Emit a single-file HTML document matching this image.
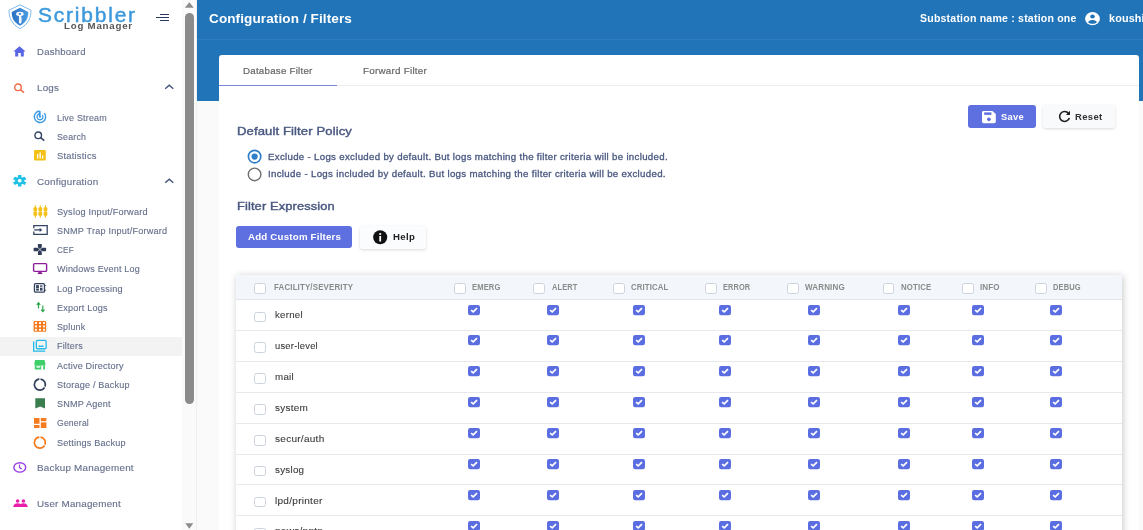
<!DOCTYPE html>
<html><head><meta charset="utf-8"><style>
html,body{margin:0;padding:0;width:1143px;height:530px;overflow:hidden;background:#fff}
body{position:relative;font-family:"Liberation Sans",sans-serif}
.t{position:absolute;white-space:nowrap;line-height:1}
svg{overflow:visible}
</style></head><body><div id="root" style="position:absolute;left:0;top:0;width:1143px;height:530px;will-change:transform">
<div style="position:absolute;left:0;top:0;width:182px;height:530px;background:#fff"></div>
<div style="position:absolute;left:0;top:337px;width:182px;height:19px;background:#f3f3f3"></div>
<div style="position:absolute;left:182px;top:0;width:14px;height:530px;background:#fafafa"></div>
<div style="position:absolute;left:196px;top:0;width:1px;height:530px;background:#efefef"></div>
<div style="position:absolute;left:185px;top:12.7px;width:8.8px;height:391px;background:#8b8b8b;border-radius:4.4px"></div>
<svg style="position:absolute;left:184px;top:1px" width="11" height="8"><path d="M0.8 6.8 L5.3 1.3 L9.8 6.8 Z" fill="#8d8d8d"/></svg>
<svg style="position:absolute;left:184px;top:522px" width="11" height="8"><path d="M1.3 1.2 L5.3 6.8 L9.3 1.2 Z" fill="#8d8d8d"/></svg>
<svg style="position:absolute;left:8px;top:4px" width="24" height="26" viewBox="0 0 24 26">
<defs><linearGradient id="sg" x1="0" x2="1" y1="0" y2="0"><stop offset="0" stop-color="#2b6fc2"/><stop offset="1" stop-color="#4b9de2"/></linearGradient></defs>
<path d="M12 0.8 L23 6.3 C23 14 20 20.5 12 24.6 C4 20.5 1 14 1 6.3 Z" fill="#fff" stroke="#74b3ea" stroke-width="0.9"/>
<path d="M12 3.7 L20.3 8 C20.3 14 18 18.5 12 21.8 C6 18.5 3.7 14 3.7 8 Z" fill="url(#sg)"/>
<ellipse cx="11.9" cy="9.9" rx="3.8" ry="2.1" fill="#f4f6f8"/><ellipse cx="11.9" cy="9.8" rx="1.3" ry="0.9" fill="#2f78c8"/>
<path d="M11 11.8 L13.4 11.8 L13.4 19 L12.2 19.8 L11 19 Z" fill="#f4f6f8"/>
<path d="M13.4 14.5 L14.3 14.5 L14.3 15.4 L13.4 15.4 Z M13.4 16.6 L14.1 16.6 L14.1 17.5 L13.4 17.5Z" fill="#f4f6f8"/>
</svg>
<div class="t" style="left:37.90px;top:5.98px;font-size:19.4px;color:#3d99dc;letter-spacing:1.700px;-webkit-text-stroke:0.45px #3d99dc;transform:scaleX(1.0773);transform-origin:0.00px 0;">Scribbler</div>
<div class="t" style="left:63.50px;top:22.32px;font-size:8.6px;color:#555;font-weight:bold;letter-spacing:0.700px;transform:scaleX(1.1266);transform-origin:0.00px 0;">Log Manager</div>
<div style="position:absolute;left:160px;top:14px;width:9px;height:1.3px;background:#2b3a5c"></div>
<div style="position:absolute;left:156px;top:16.7px;width:13px;height:1.3px;background:#2b3a5c"></div>
<div style="position:absolute;left:160px;top:20.2px;width:9px;height:1.3px;background:#2b3a5c"></div>
<div class="t" style="left:37.40px;top:47.51px;font-size:9.2px;color:#646e8b;letter-spacing:0.200px;-webkit-text-stroke:0.12px #646e8b;transform:scaleX(1.0432);transform-origin:0.00px 0;">Dashboard</div>
<div class="t" style="left:37.00px;top:83.71px;font-size:9.2px;color:#646e8b;letter-spacing:0.200px;-webkit-text-stroke:0.12px #646e8b;transform:scaleX(1.0698);transform-origin:0.00px 0;">Logs</div>
<div class="t" style="left:37.00px;top:177.61px;font-size:9.2px;color:#646e8b;letter-spacing:0.200px;-webkit-text-stroke:0.12px #646e8b;transform:scaleX(1.0711);transform-origin:0.00px 0;">Configuration</div>
<div class="t" style="left:36.90px;top:463.71px;font-size:9.2px;color:#646e8b;letter-spacing:0.200px;-webkit-text-stroke:0.12px #646e8b;transform:scaleX(1.0728);transform-origin:0.00px 0;">Backup Management</div>
<div class="t" style="left:36.90px;top:499.51px;font-size:9.2px;color:#646e8b;letter-spacing:0.200px;-webkit-text-stroke:0.12px #646e8b;transform:scaleX(1.0679);transform-origin:0.00px 0;">User Management</div>
<div class="t" style="left:57.30px;top:113.98px;font-size:9.0px;color:#646e8b;letter-spacing:0.200px;-webkit-text-stroke:0.12px #646e8b;transform:scaleX(0.9937);transform-origin:0.00px 0;">Live Stream</div>
<div class="t" style="left:57.30px;top:133.18px;font-size:9.0px;color:#646e8b;letter-spacing:0.200px;-webkit-text-stroke:0.12px #646e8b;transform:scaleX(0.9821);transform-origin:0.00px 0;">Search</div>
<div class="t" style="left:57.30px;top:152.18px;font-size:9.0px;color:#646e8b;letter-spacing:0.200px;-webkit-text-stroke:0.12px #646e8b;transform:scaleX(1.0450);transform-origin:0.00px 0;">Statistics</div>
<div class="t" style="left:57.30px;top:207.88px;font-size:9.0px;color:#646e8b;letter-spacing:0.200px;-webkit-text-stroke:0.12px #646e8b;transform:scaleX(1.0197);transform-origin:0.00px 0;">Syslog Input/Forward</div>
<div class="t" style="left:57.30px;top:226.88px;font-size:9.0px;color:#646e8b;letter-spacing:0.200px;-webkit-text-stroke:0.12px #646e8b;transform:scaleX(1.0110);transform-origin:0.00px 0;">SNMP Trap Input/Forward</div>
<div class="t" style="left:57.30px;top:245.78px;font-size:9.0px;color:#646e8b;letter-spacing:0.200px;-webkit-text-stroke:0.12px #646e8b;transform:scaleX(0.9022);transform-origin:0.00px 0;">CEF</div>
<div class="t" style="left:57.30px;top:265.28px;font-size:9.0px;color:#646e8b;letter-spacing:0.200px;-webkit-text-stroke:0.12px #646e8b;transform:scaleX(1.0005);transform-origin:0.00px 0;">Windows Event Log</div>
<div class="t" style="left:57.30px;top:284.78px;font-size:9.0px;color:#646e8b;letter-spacing:0.200px;-webkit-text-stroke:0.12px #646e8b;transform:scaleX(1.0131);transform-origin:0.00px 0;">Log Processing</div>
<div class="t" style="left:57.30px;top:303.78px;font-size:9.0px;color:#646e8b;letter-spacing:0.200px;-webkit-text-stroke:0.12px #646e8b;transform:scaleX(1.0117);transform-origin:0.00px 0;">Export Logs</div>
<div class="t" style="left:57.30px;top:322.78px;font-size:9.0px;color:#646e8b;letter-spacing:0.200px;-webkit-text-stroke:0.12px #646e8b;transform:scaleX(0.9865);transform-origin:0.00px 0;">Splunk</div>
<div class="t" style="left:57.30px;top:342.18px;font-size:9.0px;color:#646e8b;letter-spacing:0.200px;-webkit-text-stroke:0.12px #646e8b;transform:scaleX(0.9969);transform-origin:0.00px 0;">Filters</div>
<div class="t" style="left:57.30px;top:361.78px;font-size:9.0px;color:#646e8b;letter-spacing:0.200px;-webkit-text-stroke:0.12px #646e8b;transform:scaleX(1.0061);transform-origin:0.00px 0;">Active Directory</div>
<div class="t" style="left:57.30px;top:380.88px;font-size:9.0px;color:#646e8b;letter-spacing:0.200px;-webkit-text-stroke:0.12px #646e8b;transform:scaleX(1.0079);transform-origin:0.00px 0;">Storage / Backup</div>
<div class="t" style="left:57.30px;top:399.98px;font-size:9.0px;color:#646e8b;letter-spacing:0.200px;-webkit-text-stroke:0.12px #646e8b;transform:scaleX(1.0086);transform-origin:0.00px 0;">SNMP Agent</div>
<div class="t" style="left:57.30px;top:419.28px;font-size:9.0px;color:#646e8b;letter-spacing:0.200px;-webkit-text-stroke:0.12px #646e8b;transform:scaleX(0.9567);transform-origin:0.00px 0;">General</div>
<div class="t" style="left:57.30px;top:438.58px;font-size:9.0px;color:#646e8b;letter-spacing:0.200px;-webkit-text-stroke:0.12px #646e8b;transform:scaleX(1.0100);transform-origin:0.00px 0;">Settings Backup</div>
<svg style="position:absolute;left:163px;top:83.4px" width="12" height="8"><path d="M2.2 5.75 L6.25 2.2 L10.3 5.75" fill="none" stroke="#44547a" stroke-width="1.45"/></svg>
<svg style="position:absolute;left:163px;top:176.9px" width="12" height="8"><path d="M2.2 5.75 L6.25 2.2 L10.3 5.75" fill="none" stroke="#44547a" stroke-width="1.45"/></svg>
<svg style="position:absolute;left:13px;top:46px" width="13" height="11" viewBox="0 0 13 11"><path d="M6.5 0.3 L12.6 5.6 L10.8 5.6 L10.8 10.5 L7.8 10.5 L7.8 7 L5.2 7 L5.2 10.5 L2.2 10.5 L2.2 5.6 L0.4 5.6 Z" fill="#5865e4"/></svg>
<svg style="position:absolute;left:13px;top:82.5px" width="13" height="10" viewBox="0 0 13 10"><circle cx="5" cy="4.3" r="3.3" fill="none" stroke="#f26b4a" stroke-width="1.4"/><path d="M7.4 6.6 L11 9.6" stroke="#f26b4a" stroke-width="1.5"/></svg>
<svg style="position:absolute;left:30px;top:106px" width="20" height="20" viewBox="0 0 20 20"><path d="M14.37 7.09 A5.7 5.7 0 1 1 9.50 5.07" fill="none" stroke="#3d9be3" stroke-width="1.4"/><path d="M12.30 8.82 A3.0 3.0 0 1 1 9.74 7.76" fill="none" stroke="#3d9be3" stroke-width="1.3"/><path d="M9.75 4.9 L9.75 10.75" stroke="#3d9be3" stroke-width="1.8"/><circle cx="10" cy="10.75" r="1.1" fill="#3d9be3"/></svg>
<svg style="position:absolute;left:33px;top:131px" width="13" height="10" viewBox="0 0 13 10"><circle cx="5.2" cy="4.3" r="3.3" fill="none" stroke="#354462" stroke-width="1.4"/><path d="M7.6 6.6 L11.3 9.6" stroke="#354462" stroke-width="1.6"/></svg>
<svg style="position:absolute;left:34px;top:149.5px" width="12" height="11" viewBox="0 0 12 11"><rect x="0" y="0" width="11.8" height="10.5" rx="1" fill="#f3c118"/><rect x="3" y="4" width="1.3" height="4.5" fill="#fff"/><rect x="5.5" y="2.5" width="1.3" height="6" fill="#fff"/><rect x="8" y="5.5" width="1.3" height="3" fill="#fff"/></svg>
<svg style="position:absolute;left:12.8px;top:174.6px" width="13.4" height="11.6" viewBox="-10 -10 20 20" preserveAspectRatio="none"><g fill="#1fc0e6"><circle r="6.6"/><rect x="-2.6" y="-10" width="5.2" height="5" rx="0.6" transform="rotate(0)"/><rect x="-2.6" y="-10" width="5.2" height="5" rx="0.6" transform="rotate(60)"/><rect x="-2.6" y="-10" width="5.2" height="5" rx="0.6" transform="rotate(120)"/><rect x="-2.6" y="-10" width="5.2" height="5" rx="0.6" transform="rotate(180)"/><rect x="-2.6" y="-10" width="5.2" height="5" rx="0.6" transform="rotate(240)"/><rect x="-2.6" y="-10" width="5.2" height="5" rx="0.6" transform="rotate(300)"/></g><circle r="2.9" fill="#fff"/></svg>
<svg style="position:absolute;left:32.5px;top:204.5px" width="15" height="13" viewBox="0 0 15 13"><g fill="#f3c118"><rect x="1.75" y="0.3" width="1.1" height="12.4"/><rect x="0.40" y="2.2" width="3.8" height="4.1" rx="1.3"/><rect x="0.40" y="6.6" width="3.8" height="4.3" rx="1.3"/><rect x="6.75" y="0.3" width="1.1" height="12.4"/><rect x="5.40" y="2.2" width="3.8" height="4.1" rx="1.3"/><rect x="5.40" y="6.6" width="3.8" height="4.3" rx="1.3"/><rect x="11.95" y="0.3" width="1.1" height="12.4"/><rect x="10.60" y="2.2" width="3.8" height="4.1" rx="1.3"/><rect x="10.60" y="6.6" width="3.8" height="4.3" rx="1.3"/></g></svg>
<svg style="position:absolute;left:32.5px;top:225px" width="15" height="11" viewBox="0 0 15 11"><path d="M0.8 3.2 L0.8 0.7 L14.2 0.7 L14.2 9.4 L0.8 9.4 L0.8 6.6" fill="none" stroke="#354462" stroke-width="1.3"/><path d="M1.2 4.9 L7 4.9" stroke="#354462" stroke-width="1.3"/><path d="M6.6 2.8 L9.3 4.9 L6.6 7 Z" fill="#354462"/></svg>
<svg style="position:absolute;left:30px;top:240px" width="20" height="20" viewBox="0 0 20 20"><g fill="#2f3d58"><rect x="7.9" y="3.9" width="3.9" height="11.1" rx="0.6"/><rect x="3.6" y="7.8" width="12.5" height="3.4" rx="0.6"/></g><path d="M7.2 6.9 L12.5 12.1 M12.5 6.9 L7.2 12.1" stroke="#fff" stroke-width="0.7"/></svg>
<svg style="position:absolute;left:30px;top:260px" width="20" height="16" viewBox="0 0 20 16"><rect x="3.6" y="3.6" width="13" height="7.8" rx="1" fill="none" stroke="#8e1c9c" stroke-width="1.4"/><path d="M7.4 14 L12.6 14 L11.3 12.1 L8.7 12.1 Z" fill="#8e1c9c"/></svg>
<svg style="position:absolute;left:30px;top:280px" width="20" height="20" viewBox="0 0 20 20"><rect x="4.45" y="3.65" width="10" height="8.5" rx="1" fill="none" stroke="#34425f" stroke-width="1.3"/><g fill="#34425f"><rect x="6.1" y="5.1" width="2.8" height="3.4"/><rect x="10" y="5.1" width="2.5" height="2.2" opacity="0.7"/><rect x="6.1" y="9" width="2.8" height="1.6"/><rect x="10" y="7.9" width="2.5" height="2.7"/><path d="M15 4.9 L16.6 5.5 L15 6.1Z M15 9.6 L16.6 10.2 L15 10.8Z"/></g></svg>
<svg style="position:absolute;left:35.5px;top:302px" width="10" height="11" viewBox="0 0 10 11"><path d="M2.5 1 L2.5 6.5 M0.8 2.8 L2.5 0.8 L4.2 2.8" fill="none" stroke="#2aa84a" stroke-width="1.2"/><path d="M6.8 3.5 L6.8 9.5 M5.1 7.6 L6.8 9.6 L8.5 7.6" fill="none" stroke="#2aa84a" stroke-width="1.2"/></svg>
<svg style="position:absolute;left:30px;top:316px" width="20" height="20" viewBox="0 0 20 20"><rect x="3.6" y="4.9" width="12.6" height="10.8" rx="1" fill="#f47b20"/><g fill="#fff"><rect x="5.05" y="6.05" width="1.9" height="1.9"/><rect x="5.05" y="9.45" width="1.9" height="1.9"/><rect x="5.05" y="12.85" width="1.9" height="1.9"/><rect x="9.05" y="6.05" width="1.9" height="1.9"/><rect x="9.05" y="9.45" width="1.9" height="1.9"/><rect x="9.05" y="12.85" width="1.9" height="1.9"/><rect x="13.05" y="6.05" width="1.9" height="1.9"/><rect x="13.05" y="9.45" width="1.9" height="1.9"/><rect x="13.05" y="12.85" width="1.9" height="1.9"/></g></svg>
<svg style="position:absolute;left:30px;top:336px" width="20" height="20" viewBox="0 0 20 20"><path d="M3.65 6 L3.65 15.15 L14.7 15.15" fill="none" stroke="#23b9e8" stroke-width="1.3" stroke-linecap="round"/><rect x="6.35" y="4.45" width="9.8" height="8.3" rx="1.2" fill="none" stroke="#23b9e8" stroke-width="1.3"/><path d="M8.1 11 L9.7 9.1 L10.8 10.1 L12.3 8.9 L14.1 11 Z" fill="#23b9e8"/></svg>
<svg style="position:absolute;left:30px;top:356px" width="20" height="16" viewBox="0 0 20 16"><path d="M5.2 4.1 L14.5 4.1 L15.3 7 L15.3 9.5 L4.4 9.5 L4.4 7 Z" fill="#3ecf6a"/><path d="M4.8 9.5 L11.2 9.5 L11.2 13.6 L4.8 13.6 Z M13.2 9.5 L15 9.5 L15 13.6 L13.2 13.6Z" fill="#3ecf6a"/><rect x="6.5" y="10.2" width="3.7" height="1.4" fill="#fff"/></svg>
<svg style="position:absolute;left:30px;top:376px" width="20" height="18" viewBox="0 0 20 18"><path d="M10.47 3.13 A5.5 5.5 0 0 1 15.00 10.66 M14.56 11.51 A5.5 5.5 0 1 1 9.33 3.13" fill="none" stroke="#34425f" stroke-width="1.7"/></svg>
<svg style="position:absolute;left:34.8px;top:398px" width="11" height="11" viewBox="0 0 11 11"><path d="M0.3 0.3 L10 0.3 L10 10.5 L5.2 8.5 L0.3 10.5 Z" fill="#3a7d4f"/></svg>
<svg style="position:absolute;left:34px;top:418px" width="13" height="10" viewBox="0 0 13 10"><g fill="#f47b20"><rect x="0" y="0" width="5.5" height="5.8"/><rect x="6.8" y="0" width="5.6" height="3.2"/><rect x="0" y="7" width="5.5" height="3"/><rect x="6.8" y="4.4" width="5.6" height="5.6"/></g></svg>
<svg style="position:absolute;left:30px;top:433.6px" width="20" height="18" viewBox="0 0 20 18"><path d="M10.47 3.13 A5.5 5.5 0 0 1 15.00 10.66 M14.56 11.51 A5.5 5.5 0 1 1 9.33 3.13" fill="none" stroke="#f47b20" stroke-width="1.7"/></svg>
<svg style="position:absolute;left:12.5px;top:461.5px" width="14" height="11" viewBox="0 0 14 11"><ellipse cx="6.8" cy="5.4" rx="5.9" ry="4.7" fill="none" stroke="#9a3ee6" stroke-width="1.4"/><path d="M6.5 2.6 L6.5 5.6 L8.8 7" fill="none" stroke="#9a3ee6" stroke-width="1.2"/></svg>
<svg style="position:absolute;left:12.5px;top:499px" width="15" height="8" viewBox="0 0 15 8"><g fill="#e91eaa"><circle cx="4.6" cy="2" r="1.8"/><circle cx="10.4" cy="2" r="1.8"/><path d="M0.2 8 C0.5 5.2 2.5 4.3 4.6 4.3 C6.7 4.3 8.7 5.2 9 8Z"/><path d="M6 8 C6.3 5.2 8.3 4.3 10.4 4.3 C12.5 4.3 14.5 5.2 14.8 8Z"/></g></svg>
<div style="position:absolute;left:197px;top:0;width:946px;height:530px;background:#fafafa"></div>
<div style="position:absolute;left:197px;top:0;width:946px;height:101px;background:#2174b8"></div>
<div style="position:absolute;left:197px;top:39px;width:946px;height:1px;background:#2e7dbe"></div>
<div class="t" style="left:209.00px;top:11.93px;font-size:13.2px;color:#fff;font-weight:bold;letter-spacing:0.100px;transform:scaleX(1.0262);transform-origin:0.00px 0;">Configuration / Filters</div>
<div class="t" style="left:919.60px;top:13.01px;font-size:10.5px;color:#fff;font-weight:bold;letter-spacing:0.200px;transform:scaleX(1.0055);transform-origin:0.00px 0;">Substation name : station one</div>
<svg style="position:absolute;left:1085px;top:11.6px" width="15" height="13.4" viewBox="0 0 15 15" preserveAspectRatio="none"><circle cx="7.5" cy="7.5" r="7.4" fill="#fff"/><circle cx="7.5" cy="5.1" r="2.3" fill="#2174b8"/><path d="M3.1 11.4 C4.2 9.7 5.9 9.1 7.5 9.1 C9.1 9.1 10.8 9.7 11.9 11.4 C10.8 12.6 9.3 13.2 7.5 13.2 C5.7 13.2 4.2 12.6 3.1 11.4Z" fill="#2174b8"/></svg>
<div class="t" style="left:1109.00px;top:12.76px;font-size:10.8px;color:#fff;font-weight:bold;letter-spacing:0.150px;">koushi</div>
<div style="position:absolute;left:219px;top:55px;width:920px;height:500px;background:#fff;border-radius:3px"></div>
<div style="position:absolute;left:219px;top:85px;width:920px;height:1px;background:#ececec"></div>
<div style="position:absolute;left:219px;top:84.5px;width:118px;height:1.5px;background:#7a86d8"></div>
<div class="t" style="left:243.00px;top:66.24px;font-size:9.4px;color:#666;letter-spacing:0.250px;-webkit-text-stroke:0.20px #666;transform:scaleX(1.0337);transform-origin:0.00px 0;">Database Filter</div>
<div class="t" style="left:363.00px;top:66.24px;font-size:9.4px;color:#666;letter-spacing:0.250px;-webkit-text-stroke:0.20px #666;transform:scaleX(1.0449);transform-origin:0.00px 0;">Forward Filter</div>
<div style="position:absolute;left:968px;top:105px;width:68px;height:23px;background:#5e6fe0;border-radius:3px"></div>
<svg style="position:absolute;left:982px;top:110.7px" width="14" height="12.2" viewBox="0 0 14 13" preserveAspectRatio="none"><path d="M0 1.5 Q0 0 1.5 0 L10.5 0 L13.8 3.2 L13.8 11.5 Q13.8 13 12.3 13 L1.5 13 Q0 13 0 11.5Z" fill="#fff"/><rect x="2.2" y="1.5" width="7.2" height="2.6" fill="#5e6fe0"/><circle cx="6.9" cy="8.9" r="1.9" fill="#5e6fe0"/></svg>
<div class="t" style="left:1000.80px;top:113.01px;font-size:9.2px;color:#fff;font-weight:bold;letter-spacing:0.300px;transform:scaleX(1.0187);transform-origin:0.00px 0;">Save</div>
<div style="position:absolute;left:1043px;top:105px;width:72px;height:23px;background:#f8fafc;border-radius:3px;box-shadow:0 1px 3px rgba(0,0,0,0.15)"></div>
<svg style="position:absolute;left:1058px;top:110px" width="13" height="13" viewBox="0 0 13 13"><path d="M10.6 3.4 A5 5 0 1 0 11.4 8" fill="none" stroke="#222" stroke-width="1.6"/><path d="M12 0.8 L12 5 L7.8 5 Z" fill="#222"/></svg>
<div class="t" style="left:1075.40px;top:113.01px;font-size:9.2px;color:#333;font-weight:bold;letter-spacing:0.300px;transform:scaleX(1.0354);transform-origin:0.00px 0;">Reset</div>
<div class="t" style="left:237.00px;top:125.97px;font-size:10.9px;color:#4a5880;letter-spacing:0.100px;-webkit-text-stroke:0.40px #4a5880;transform:scaleX(1.1991);transform-origin:0.00px 0;">Default Filter Policy</div>
<svg style="position:absolute;left:240px;top:140px" width="30" height="45" viewBox="0 0 30 45"><circle cx="14.6" cy="16.6" r="6.2" fill="none" stroke="#2f7fc8" stroke-width="1.7"/><circle cx="14.6" cy="16.6" r="3.1" fill="#2f7fc8"/><circle cx="14.6" cy="34.4" r="6.3" fill="none" stroke="#6e6e6e" stroke-width="1.4"/></svg>
<div class="t" style="left:267.90px;top:152.63px;font-size:9.3px;color:#4a5880;letter-spacing:0.300px;-webkit-text-stroke:0.30px #4a5880;transform:scaleX(1.0389);transform-origin:0.00px 0;">Exclude - Logs excluded by default. But logs matching the filter criteria will be included.</div>
<div class="t" style="left:267.90px;top:170.33px;font-size:9.3px;color:#4a5880;letter-spacing:0.300px;-webkit-text-stroke:0.30px #4a5880;transform:scaleX(1.0420);transform-origin:0.00px 0;">Include - Logs included by default. But logs matching the filter criteria will be excluded.</div>
<div class="t" style="left:237.00px;top:200.57px;font-size:10.9px;color:#4a5880;letter-spacing:0.100px;-webkit-text-stroke:0.40px #4a5880;transform:scaleX(1.1807);transform-origin:0.00px 0;">Filter Expression</div>
<div style="position:absolute;left:236px;top:225.8px;width:116px;height:22.6px;background:#5e6fe0;border-radius:3px"></div>
<div class="t" style="left:248.00px;top:233.03px;font-size:9.3px;color:#fff;font-weight:bold;letter-spacing:0.200px;transform:scaleX(1.0427);transform-origin:0.00px 0;">Add Custom Filters</div>
<div style="position:absolute;left:360px;top:226px;width:66px;height:23px;background:#fbfcfd;border-radius:3px;box-shadow:0 1px 3px rgba(0,0,0,0.15)"></div>
<svg style="position:absolute;left:373.3px;top:229.7px" width="15" height="15" viewBox="0 0 15 15"><circle cx="7.2" cy="7.2" r="7" fill="#111"/><circle cx="7.2" cy="4" r="1.1" fill="#fff"/><rect x="6.3" y="6" width="1.8" height="5.5" fill="#fff"/></svg>
<div class="t" style="left:392.50px;top:232.24px;font-size:9.4px;color:#222;font-weight:bold;letter-spacing:0.300px;transform:scaleX(1.0258);transform-origin:0.00px 0;">Help</div>
<div style="position:absolute;left:236px;top:274.5px;width:886px;height:300px;background:#fff;box-shadow:1px 1px 7px rgba(0,0,0,0.22)"></div>
<div style="position:absolute;left:236px;top:274.5px;width:886px;height:24.8px;background:#f3f7fb"></div>
<div style="position:absolute;left:236px;top:299px;width:886px;height:1px;background:#e2e6eb"></div>
<div style="position:absolute;left:254.4px;top:283.2px;width:9.5px;height:8.5px;border:1px solid #cdd3dc;border-radius:2.5px;background:#fff"></div>
<div class="t" style="left:274.00px;top:283.02px;font-size:8.6px;color:#8a8a8a;font-weight:bold;letter-spacing:0.150px;transform:scaleX(0.9233);transform-origin:0.00px 0;">FACILITY/SEVERITY</div>
<div style="position:absolute;left:454.3px;top:283.2px;width:9.5px;height:8.5px;border:1px solid #cdd3dc;border-radius:2.5px;background:#fff"></div>
<div class="t" style="left:471.80px;top:283.02px;font-size:8.6px;color:#8a8a8a;font-weight:bold;letter-spacing:0.150px;transform:scaleX(0.8842);transform-origin:0.00px 0;">EMERG</div>
<div style="position:absolute;left:533.3px;top:283.2px;width:9.5px;height:8.5px;border:1px solid #cdd3dc;border-radius:2.5px;background:#fff"></div>
<div class="t" style="left:551.50px;top:283.02px;font-size:8.6px;color:#8a8a8a;font-weight:bold;letter-spacing:0.150px;transform:scaleX(0.8640);transform-origin:0.00px 0;">ALERT</div>
<div style="position:absolute;left:613.2px;top:283.2px;width:9.5px;height:8.5px;border:1px solid #cdd3dc;border-radius:2.5px;background:#fff"></div>
<div class="t" style="left:631.00px;top:283.02px;font-size:8.6px;color:#8a8a8a;font-weight:bold;letter-spacing:0.150px;transform:scaleX(0.9085);transform-origin:0.00px 0;">CRITICAL</div>
<div style="position:absolute;left:705.3px;top:283.2px;width:9.5px;height:8.5px;border:1px solid #cdd3dc;border-radius:2.5px;background:#fff"></div>
<div class="t" style="left:722.80px;top:283.02px;font-size:8.6px;color:#8a8a8a;font-weight:bold;letter-spacing:0.150px;transform:scaleX(0.8595);transform-origin:0.00px 0;">ERROR</div>
<div style="position:absolute;left:787.3px;top:283.2px;width:9.5px;height:8.5px;border:1px solid #cdd3dc;border-radius:2.5px;background:#fff"></div>
<div class="t" style="left:805.00px;top:283.02px;font-size:8.6px;color:#8a8a8a;font-weight:bold;letter-spacing:0.150px;transform:scaleX(0.9345);transform-origin:0.00px 0;">WARNING</div>
<div style="position:absolute;left:882.9px;top:283.2px;width:9.5px;height:8.5px;border:1px solid #cdd3dc;border-radius:2.5px;background:#fff"></div>
<div class="t" style="left:900.60px;top:283.02px;font-size:8.6px;color:#8a8a8a;font-weight:bold;letter-spacing:0.150px;transform:scaleX(0.9111);transform-origin:0.00px 0;">NOTICE</div>
<div style="position:absolute;left:962px;top:283.2px;width:9.5px;height:8.5px;border:1px solid #cdd3dc;border-radius:2.5px;background:#fff"></div>
<div class="t" style="left:979.80px;top:283.02px;font-size:8.6px;color:#8a8a8a;font-weight:bold;letter-spacing:0.150px;transform:scaleX(0.9332);transform-origin:0.00px 0;">INFO</div>
<div style="position:absolute;left:1035.3px;top:283.2px;width:9.5px;height:8.5px;border:1px solid #cdd3dc;border-radius:2.5px;background:#fff"></div>
<div class="t" style="left:1053.20px;top:283.02px;font-size:8.6px;color:#8a8a8a;font-weight:bold;letter-spacing:0.150px;transform:scaleX(0.8753);transform-origin:0.00px 0;">DEBUG</div>
<div style="position:absolute;left:254.4px;top:311.6px;width:9.5px;height:8.5px;border:1px solid #cdd3dc;border-radius:2.5px;background:#fff"></div>
<div class="t" style="left:274.60px;top:310.47px;font-size:9.6px;color:#3a3a3a;letter-spacing:0.250px;-webkit-text-stroke:0.10px #3a3a3a;transform:scaleX(1.0069);transform-origin:0.00px 0;">kernel</div>
<svg style="position:absolute;left:468.4px;top:304.6px" width="12" height="10.2" viewBox="0 0 12 10.2"><rect x="0" y="0" width="12" height="10.2" rx="2.2" fill="#5b6ee1"/><path d="M3.1 5.2 L5.2 6.9 L9 3.1" fill="none" stroke="#fff" stroke-width="1.7"/></svg>
<svg style="position:absolute;left:546.8px;top:304.6px" width="12" height="10.2" viewBox="0 0 12 10.2"><rect x="0" y="0" width="12" height="10.2" rx="2.2" fill="#5b6ee1"/><path d="M3.1 5.2 L5.2 6.9 L9 3.1" fill="none" stroke="#fff" stroke-width="1.7"/></svg>
<svg style="position:absolute;left:632.5px;top:304.6px" width="12" height="10.2" viewBox="0 0 12 10.2"><rect x="0" y="0" width="12" height="10.2" rx="2.2" fill="#5b6ee1"/><path d="M3.1 5.2 L5.2 6.9 L9 3.1" fill="none" stroke="#fff" stroke-width="1.7"/></svg>
<svg style="position:absolute;left:718.8px;top:304.6px" width="12" height="10.2" viewBox="0 0 12 10.2"><rect x="0" y="0" width="12" height="10.2" rx="2.2" fill="#5b6ee1"/><path d="M3.1 5.2 L5.2 6.9 L9 3.1" fill="none" stroke="#fff" stroke-width="1.7"/></svg>
<svg style="position:absolute;left:807.6px;top:304.6px" width="12" height="10.2" viewBox="0 0 12 10.2"><rect x="0" y="0" width="12" height="10.2" rx="2.2" fill="#5b6ee1"/><path d="M3.1 5.2 L5.2 6.9 L9 3.1" fill="none" stroke="#fff" stroke-width="1.7"/></svg>
<svg style="position:absolute;left:898.3px;top:304.6px" width="12" height="10.2" viewBox="0 0 12 10.2"><rect x="0" y="0" width="12" height="10.2" rx="2.2" fill="#5b6ee1"/><path d="M3.1 5.2 L5.2 6.9 L9 3.1" fill="none" stroke="#fff" stroke-width="1.7"/></svg>
<svg style="position:absolute;left:971.7px;top:304.6px" width="12" height="10.2" viewBox="0 0 12 10.2"><rect x="0" y="0" width="12" height="10.2" rx="2.2" fill="#5b6ee1"/><path d="M3.1 5.2 L5.2 6.9 L9 3.1" fill="none" stroke="#fff" stroke-width="1.7"/></svg>
<svg style="position:absolute;left:1049.5px;top:304.6px" width="12" height="10.2" viewBox="0 0 12 10.2"><rect x="0" y="0" width="12" height="10.2" rx="2.2" fill="#5b6ee1"/><path d="M3.1 5.2 L5.2 6.9 L9 3.1" fill="none" stroke="#fff" stroke-width="1.7"/></svg>
<div style="position:absolute;left:236px;top:330.15px;width:886px;height:1px;background:#e8e9ec"></div>
<div style="position:absolute;left:254.4px;top:342.45px;width:9.5px;height:8.5px;border:1px solid #cdd3dc;border-radius:2.5px;background:#fff"></div>
<div class="t" style="left:274.60px;top:341.32px;font-size:9.6px;color:#3a3a3a;letter-spacing:0.250px;-webkit-text-stroke:0.10px #3a3a3a;transform:scaleX(0.9734);transform-origin:0.00px 0;">user-level</div>
<svg style="position:absolute;left:468.4px;top:335.45px" width="12" height="10.2" viewBox="0 0 12 10.2"><rect x="0" y="0" width="12" height="10.2" rx="2.2" fill="#5b6ee1"/><path d="M3.1 5.2 L5.2 6.9 L9 3.1" fill="none" stroke="#fff" stroke-width="1.7"/></svg>
<svg style="position:absolute;left:546.8px;top:335.45px" width="12" height="10.2" viewBox="0 0 12 10.2"><rect x="0" y="0" width="12" height="10.2" rx="2.2" fill="#5b6ee1"/><path d="M3.1 5.2 L5.2 6.9 L9 3.1" fill="none" stroke="#fff" stroke-width="1.7"/></svg>
<svg style="position:absolute;left:632.5px;top:335.45px" width="12" height="10.2" viewBox="0 0 12 10.2"><rect x="0" y="0" width="12" height="10.2" rx="2.2" fill="#5b6ee1"/><path d="M3.1 5.2 L5.2 6.9 L9 3.1" fill="none" stroke="#fff" stroke-width="1.7"/></svg>
<svg style="position:absolute;left:718.8px;top:335.45px" width="12" height="10.2" viewBox="0 0 12 10.2"><rect x="0" y="0" width="12" height="10.2" rx="2.2" fill="#5b6ee1"/><path d="M3.1 5.2 L5.2 6.9 L9 3.1" fill="none" stroke="#fff" stroke-width="1.7"/></svg>
<svg style="position:absolute;left:807.6px;top:335.45px" width="12" height="10.2" viewBox="0 0 12 10.2"><rect x="0" y="0" width="12" height="10.2" rx="2.2" fill="#5b6ee1"/><path d="M3.1 5.2 L5.2 6.9 L9 3.1" fill="none" stroke="#fff" stroke-width="1.7"/></svg>
<svg style="position:absolute;left:898.3px;top:335.45px" width="12" height="10.2" viewBox="0 0 12 10.2"><rect x="0" y="0" width="12" height="10.2" rx="2.2" fill="#5b6ee1"/><path d="M3.1 5.2 L5.2 6.9 L9 3.1" fill="none" stroke="#fff" stroke-width="1.7"/></svg>
<svg style="position:absolute;left:971.7px;top:335.45px" width="12" height="10.2" viewBox="0 0 12 10.2"><rect x="0" y="0" width="12" height="10.2" rx="2.2" fill="#5b6ee1"/><path d="M3.1 5.2 L5.2 6.9 L9 3.1" fill="none" stroke="#fff" stroke-width="1.7"/></svg>
<svg style="position:absolute;left:1049.5px;top:335.45px" width="12" height="10.2" viewBox="0 0 12 10.2"><rect x="0" y="0" width="12" height="10.2" rx="2.2" fill="#5b6ee1"/><path d="M3.1 5.2 L5.2 6.9 L9 3.1" fill="none" stroke="#fff" stroke-width="1.7"/></svg>
<div style="position:absolute;left:236px;top:361.0px;width:886px;height:1px;background:#e8e9ec"></div>
<div style="position:absolute;left:254.4px;top:373.3px;width:9.5px;height:8.5px;border:1px solid #cdd3dc;border-radius:2.5px;background:#fff"></div>
<div class="t" style="left:274.60px;top:372.17px;font-size:9.6px;color:#3a3a3a;letter-spacing:0.250px;-webkit-text-stroke:0.10px #3a3a3a;transform:scaleX(1.0182);transform-origin:0.00px 0;">mail</div>
<svg style="position:absolute;left:468.4px;top:366.3px" width="12" height="10.2" viewBox="0 0 12 10.2"><rect x="0" y="0" width="12" height="10.2" rx="2.2" fill="#5b6ee1"/><path d="M3.1 5.2 L5.2 6.9 L9 3.1" fill="none" stroke="#fff" stroke-width="1.7"/></svg>
<svg style="position:absolute;left:546.8px;top:366.3px" width="12" height="10.2" viewBox="0 0 12 10.2"><rect x="0" y="0" width="12" height="10.2" rx="2.2" fill="#5b6ee1"/><path d="M3.1 5.2 L5.2 6.9 L9 3.1" fill="none" stroke="#fff" stroke-width="1.7"/></svg>
<svg style="position:absolute;left:632.5px;top:366.3px" width="12" height="10.2" viewBox="0 0 12 10.2"><rect x="0" y="0" width="12" height="10.2" rx="2.2" fill="#5b6ee1"/><path d="M3.1 5.2 L5.2 6.9 L9 3.1" fill="none" stroke="#fff" stroke-width="1.7"/></svg>
<svg style="position:absolute;left:718.8px;top:366.3px" width="12" height="10.2" viewBox="0 0 12 10.2"><rect x="0" y="0" width="12" height="10.2" rx="2.2" fill="#5b6ee1"/><path d="M3.1 5.2 L5.2 6.9 L9 3.1" fill="none" stroke="#fff" stroke-width="1.7"/></svg>
<svg style="position:absolute;left:807.6px;top:366.3px" width="12" height="10.2" viewBox="0 0 12 10.2"><rect x="0" y="0" width="12" height="10.2" rx="2.2" fill="#5b6ee1"/><path d="M3.1 5.2 L5.2 6.9 L9 3.1" fill="none" stroke="#fff" stroke-width="1.7"/></svg>
<svg style="position:absolute;left:898.3px;top:366.3px" width="12" height="10.2" viewBox="0 0 12 10.2"><rect x="0" y="0" width="12" height="10.2" rx="2.2" fill="#5b6ee1"/><path d="M3.1 5.2 L5.2 6.9 L9 3.1" fill="none" stroke="#fff" stroke-width="1.7"/></svg>
<svg style="position:absolute;left:971.7px;top:366.3px" width="12" height="10.2" viewBox="0 0 12 10.2"><rect x="0" y="0" width="12" height="10.2" rx="2.2" fill="#5b6ee1"/><path d="M3.1 5.2 L5.2 6.9 L9 3.1" fill="none" stroke="#fff" stroke-width="1.7"/></svg>
<svg style="position:absolute;left:1049.5px;top:366.3px" width="12" height="10.2" viewBox="0 0 12 10.2"><rect x="0" y="0" width="12" height="10.2" rx="2.2" fill="#5b6ee1"/><path d="M3.1 5.2 L5.2 6.9 L9 3.1" fill="none" stroke="#fff" stroke-width="1.7"/></svg>
<div style="position:absolute;left:236px;top:391.85px;width:886px;height:1px;background:#e8e9ec"></div>
<div style="position:absolute;left:254.4px;top:404.15000000000003px;width:9.5px;height:8.5px;border:1px solid #cdd3dc;border-radius:2.5px;background:#fff"></div>
<div class="t" style="left:274.60px;top:403.02px;font-size:9.6px;color:#3a3a3a;letter-spacing:0.250px;-webkit-text-stroke:0.10px #3a3a3a;transform:scaleX(1.0369);transform-origin:0.00px 0;">system</div>
<svg style="position:absolute;left:468.4px;top:397.15000000000003px" width="12" height="10.2" viewBox="0 0 12 10.2"><rect x="0" y="0" width="12" height="10.2" rx="2.2" fill="#5b6ee1"/><path d="M3.1 5.2 L5.2 6.9 L9 3.1" fill="none" stroke="#fff" stroke-width="1.7"/></svg>
<svg style="position:absolute;left:546.8px;top:397.15000000000003px" width="12" height="10.2" viewBox="0 0 12 10.2"><rect x="0" y="0" width="12" height="10.2" rx="2.2" fill="#5b6ee1"/><path d="M3.1 5.2 L5.2 6.9 L9 3.1" fill="none" stroke="#fff" stroke-width="1.7"/></svg>
<svg style="position:absolute;left:632.5px;top:397.15000000000003px" width="12" height="10.2" viewBox="0 0 12 10.2"><rect x="0" y="0" width="12" height="10.2" rx="2.2" fill="#5b6ee1"/><path d="M3.1 5.2 L5.2 6.9 L9 3.1" fill="none" stroke="#fff" stroke-width="1.7"/></svg>
<svg style="position:absolute;left:718.8px;top:397.15000000000003px" width="12" height="10.2" viewBox="0 0 12 10.2"><rect x="0" y="0" width="12" height="10.2" rx="2.2" fill="#5b6ee1"/><path d="M3.1 5.2 L5.2 6.9 L9 3.1" fill="none" stroke="#fff" stroke-width="1.7"/></svg>
<svg style="position:absolute;left:807.6px;top:397.15000000000003px" width="12" height="10.2" viewBox="0 0 12 10.2"><rect x="0" y="0" width="12" height="10.2" rx="2.2" fill="#5b6ee1"/><path d="M3.1 5.2 L5.2 6.9 L9 3.1" fill="none" stroke="#fff" stroke-width="1.7"/></svg>
<svg style="position:absolute;left:898.3px;top:397.15000000000003px" width="12" height="10.2" viewBox="0 0 12 10.2"><rect x="0" y="0" width="12" height="10.2" rx="2.2" fill="#5b6ee1"/><path d="M3.1 5.2 L5.2 6.9 L9 3.1" fill="none" stroke="#fff" stroke-width="1.7"/></svg>
<svg style="position:absolute;left:971.7px;top:397.15000000000003px" width="12" height="10.2" viewBox="0 0 12 10.2"><rect x="0" y="0" width="12" height="10.2" rx="2.2" fill="#5b6ee1"/><path d="M3.1 5.2 L5.2 6.9 L9 3.1" fill="none" stroke="#fff" stroke-width="1.7"/></svg>
<svg style="position:absolute;left:1049.5px;top:397.15000000000003px" width="12" height="10.2" viewBox="0 0 12 10.2"><rect x="0" y="0" width="12" height="10.2" rx="2.2" fill="#5b6ee1"/><path d="M3.1 5.2 L5.2 6.9 L9 3.1" fill="none" stroke="#fff" stroke-width="1.7"/></svg>
<div style="position:absolute;left:236px;top:422.7px;width:886px;height:1px;background:#e8e9ec"></div>
<div style="position:absolute;left:254.4px;top:435.0px;width:9.5px;height:8.5px;border:1px solid #cdd3dc;border-radius:2.5px;background:#fff"></div>
<div class="t" style="left:274.60px;top:433.87px;font-size:9.6px;color:#3a3a3a;letter-spacing:0.250px;-webkit-text-stroke:0.10px #3a3a3a;transform:scaleX(1.0471);transform-origin:0.00px 0;">secur/auth</div>
<svg style="position:absolute;left:468.4px;top:428.0px" width="12" height="10.2" viewBox="0 0 12 10.2"><rect x="0" y="0" width="12" height="10.2" rx="2.2" fill="#5b6ee1"/><path d="M3.1 5.2 L5.2 6.9 L9 3.1" fill="none" stroke="#fff" stroke-width="1.7"/></svg>
<svg style="position:absolute;left:546.8px;top:428.0px" width="12" height="10.2" viewBox="0 0 12 10.2"><rect x="0" y="0" width="12" height="10.2" rx="2.2" fill="#5b6ee1"/><path d="M3.1 5.2 L5.2 6.9 L9 3.1" fill="none" stroke="#fff" stroke-width="1.7"/></svg>
<svg style="position:absolute;left:632.5px;top:428.0px" width="12" height="10.2" viewBox="0 0 12 10.2"><rect x="0" y="0" width="12" height="10.2" rx="2.2" fill="#5b6ee1"/><path d="M3.1 5.2 L5.2 6.9 L9 3.1" fill="none" stroke="#fff" stroke-width="1.7"/></svg>
<svg style="position:absolute;left:718.8px;top:428.0px" width="12" height="10.2" viewBox="0 0 12 10.2"><rect x="0" y="0" width="12" height="10.2" rx="2.2" fill="#5b6ee1"/><path d="M3.1 5.2 L5.2 6.9 L9 3.1" fill="none" stroke="#fff" stroke-width="1.7"/></svg>
<svg style="position:absolute;left:807.6px;top:428.0px" width="12" height="10.2" viewBox="0 0 12 10.2"><rect x="0" y="0" width="12" height="10.2" rx="2.2" fill="#5b6ee1"/><path d="M3.1 5.2 L5.2 6.9 L9 3.1" fill="none" stroke="#fff" stroke-width="1.7"/></svg>
<svg style="position:absolute;left:898.3px;top:428.0px" width="12" height="10.2" viewBox="0 0 12 10.2"><rect x="0" y="0" width="12" height="10.2" rx="2.2" fill="#5b6ee1"/><path d="M3.1 5.2 L5.2 6.9 L9 3.1" fill="none" stroke="#fff" stroke-width="1.7"/></svg>
<svg style="position:absolute;left:971.7px;top:428.0px" width="12" height="10.2" viewBox="0 0 12 10.2"><rect x="0" y="0" width="12" height="10.2" rx="2.2" fill="#5b6ee1"/><path d="M3.1 5.2 L5.2 6.9 L9 3.1" fill="none" stroke="#fff" stroke-width="1.7"/></svg>
<svg style="position:absolute;left:1049.5px;top:428.0px" width="12" height="10.2" viewBox="0 0 12 10.2"><rect x="0" y="0" width="12" height="10.2" rx="2.2" fill="#5b6ee1"/><path d="M3.1 5.2 L5.2 6.9 L9 3.1" fill="none" stroke="#fff" stroke-width="1.7"/></svg>
<div style="position:absolute;left:236px;top:453.55px;width:886px;height:1px;background:#e8e9ec"></div>
<div style="position:absolute;left:254.4px;top:465.85px;width:9.5px;height:8.5px;border:1px solid #cdd3dc;border-radius:2.5px;background:#fff"></div>
<div class="t" style="left:274.60px;top:464.72px;font-size:9.6px;color:#3a3a3a;letter-spacing:0.250px;-webkit-text-stroke:0.10px #3a3a3a;transform:scaleX(1.0223);transform-origin:0.00px 0;">syslog</div>
<svg style="position:absolute;left:468.4px;top:458.85px" width="12" height="10.2" viewBox="0 0 12 10.2"><rect x="0" y="0" width="12" height="10.2" rx="2.2" fill="#5b6ee1"/><path d="M3.1 5.2 L5.2 6.9 L9 3.1" fill="none" stroke="#fff" stroke-width="1.7"/></svg>
<svg style="position:absolute;left:546.8px;top:458.85px" width="12" height="10.2" viewBox="0 0 12 10.2"><rect x="0" y="0" width="12" height="10.2" rx="2.2" fill="#5b6ee1"/><path d="M3.1 5.2 L5.2 6.9 L9 3.1" fill="none" stroke="#fff" stroke-width="1.7"/></svg>
<svg style="position:absolute;left:632.5px;top:458.85px" width="12" height="10.2" viewBox="0 0 12 10.2"><rect x="0" y="0" width="12" height="10.2" rx="2.2" fill="#5b6ee1"/><path d="M3.1 5.2 L5.2 6.9 L9 3.1" fill="none" stroke="#fff" stroke-width="1.7"/></svg>
<svg style="position:absolute;left:718.8px;top:458.85px" width="12" height="10.2" viewBox="0 0 12 10.2"><rect x="0" y="0" width="12" height="10.2" rx="2.2" fill="#5b6ee1"/><path d="M3.1 5.2 L5.2 6.9 L9 3.1" fill="none" stroke="#fff" stroke-width="1.7"/></svg>
<svg style="position:absolute;left:807.6px;top:458.85px" width="12" height="10.2" viewBox="0 0 12 10.2"><rect x="0" y="0" width="12" height="10.2" rx="2.2" fill="#5b6ee1"/><path d="M3.1 5.2 L5.2 6.9 L9 3.1" fill="none" stroke="#fff" stroke-width="1.7"/></svg>
<svg style="position:absolute;left:898.3px;top:458.85px" width="12" height="10.2" viewBox="0 0 12 10.2"><rect x="0" y="0" width="12" height="10.2" rx="2.2" fill="#5b6ee1"/><path d="M3.1 5.2 L5.2 6.9 L9 3.1" fill="none" stroke="#fff" stroke-width="1.7"/></svg>
<svg style="position:absolute;left:971.7px;top:458.85px" width="12" height="10.2" viewBox="0 0 12 10.2"><rect x="0" y="0" width="12" height="10.2" rx="2.2" fill="#5b6ee1"/><path d="M3.1 5.2 L5.2 6.9 L9 3.1" fill="none" stroke="#fff" stroke-width="1.7"/></svg>
<svg style="position:absolute;left:1049.5px;top:458.85px" width="12" height="10.2" viewBox="0 0 12 10.2"><rect x="0" y="0" width="12" height="10.2" rx="2.2" fill="#5b6ee1"/><path d="M3.1 5.2 L5.2 6.9 L9 3.1" fill="none" stroke="#fff" stroke-width="1.7"/></svg>
<div style="position:absolute;left:236px;top:484.4px;width:886px;height:1px;background:#e8e9ec"></div>
<div style="position:absolute;left:254.4px;top:496.7px;width:9.5px;height:8.5px;border:1px solid #cdd3dc;border-radius:2.5px;background:#fff"></div>
<div class="t" style="left:274.60px;top:495.57px;font-size:9.6px;color:#3a3a3a;letter-spacing:0.250px;-webkit-text-stroke:0.10px #3a3a3a;transform:scaleX(1.0493);transform-origin:0.00px 0;">lpd/printer</div>
<svg style="position:absolute;left:468.4px;top:489.7px" width="12" height="10.2" viewBox="0 0 12 10.2"><rect x="0" y="0" width="12" height="10.2" rx="2.2" fill="#5b6ee1"/><path d="M3.1 5.2 L5.2 6.9 L9 3.1" fill="none" stroke="#fff" stroke-width="1.7"/></svg>
<svg style="position:absolute;left:546.8px;top:489.7px" width="12" height="10.2" viewBox="0 0 12 10.2"><rect x="0" y="0" width="12" height="10.2" rx="2.2" fill="#5b6ee1"/><path d="M3.1 5.2 L5.2 6.9 L9 3.1" fill="none" stroke="#fff" stroke-width="1.7"/></svg>
<svg style="position:absolute;left:632.5px;top:489.7px" width="12" height="10.2" viewBox="0 0 12 10.2"><rect x="0" y="0" width="12" height="10.2" rx="2.2" fill="#5b6ee1"/><path d="M3.1 5.2 L5.2 6.9 L9 3.1" fill="none" stroke="#fff" stroke-width="1.7"/></svg>
<svg style="position:absolute;left:718.8px;top:489.7px" width="12" height="10.2" viewBox="0 0 12 10.2"><rect x="0" y="0" width="12" height="10.2" rx="2.2" fill="#5b6ee1"/><path d="M3.1 5.2 L5.2 6.9 L9 3.1" fill="none" stroke="#fff" stroke-width="1.7"/></svg>
<svg style="position:absolute;left:807.6px;top:489.7px" width="12" height="10.2" viewBox="0 0 12 10.2"><rect x="0" y="0" width="12" height="10.2" rx="2.2" fill="#5b6ee1"/><path d="M3.1 5.2 L5.2 6.9 L9 3.1" fill="none" stroke="#fff" stroke-width="1.7"/></svg>
<svg style="position:absolute;left:898.3px;top:489.7px" width="12" height="10.2" viewBox="0 0 12 10.2"><rect x="0" y="0" width="12" height="10.2" rx="2.2" fill="#5b6ee1"/><path d="M3.1 5.2 L5.2 6.9 L9 3.1" fill="none" stroke="#fff" stroke-width="1.7"/></svg>
<svg style="position:absolute;left:971.7px;top:489.7px" width="12" height="10.2" viewBox="0 0 12 10.2"><rect x="0" y="0" width="12" height="10.2" rx="2.2" fill="#5b6ee1"/><path d="M3.1 5.2 L5.2 6.9 L9 3.1" fill="none" stroke="#fff" stroke-width="1.7"/></svg>
<svg style="position:absolute;left:1049.5px;top:489.7px" width="12" height="10.2" viewBox="0 0 12 10.2"><rect x="0" y="0" width="12" height="10.2" rx="2.2" fill="#5b6ee1"/><path d="M3.1 5.2 L5.2 6.9 L9 3.1" fill="none" stroke="#fff" stroke-width="1.7"/></svg>
<div style="position:absolute;left:236px;top:515.25px;width:886px;height:1px;background:#e8e9ec"></div>
<div style="position:absolute;left:254.4px;top:527.55px;width:9.5px;height:8.5px;border:1px solid #cdd3dc;border-radius:2.5px;background:#fff"></div>
<div class="t" style="left:274.60px;top:526.42px;font-size:9.6px;color:#3a3a3a;letter-spacing:0.250px;-webkit-text-stroke:0.10px #3a3a3a;transform:scaleX(1.0464);transform-origin:0.00px 0;">news/nntp</div>
<svg style="position:absolute;left:468.4px;top:520.55px" width="12" height="10.2" viewBox="0 0 12 10.2"><rect x="0" y="0" width="12" height="10.2" rx="2.2" fill="#5b6ee1"/><path d="M3.1 5.2 L5.2 6.9 L9 3.1" fill="none" stroke="#fff" stroke-width="1.7"/></svg>
<svg style="position:absolute;left:546.8px;top:520.55px" width="12" height="10.2" viewBox="0 0 12 10.2"><rect x="0" y="0" width="12" height="10.2" rx="2.2" fill="#5b6ee1"/><path d="M3.1 5.2 L5.2 6.9 L9 3.1" fill="none" stroke="#fff" stroke-width="1.7"/></svg>
<svg style="position:absolute;left:632.5px;top:520.55px" width="12" height="10.2" viewBox="0 0 12 10.2"><rect x="0" y="0" width="12" height="10.2" rx="2.2" fill="#5b6ee1"/><path d="M3.1 5.2 L5.2 6.9 L9 3.1" fill="none" stroke="#fff" stroke-width="1.7"/></svg>
<svg style="position:absolute;left:718.8px;top:520.55px" width="12" height="10.2" viewBox="0 0 12 10.2"><rect x="0" y="0" width="12" height="10.2" rx="2.2" fill="#5b6ee1"/><path d="M3.1 5.2 L5.2 6.9 L9 3.1" fill="none" stroke="#fff" stroke-width="1.7"/></svg>
<svg style="position:absolute;left:807.6px;top:520.55px" width="12" height="10.2" viewBox="0 0 12 10.2"><rect x="0" y="0" width="12" height="10.2" rx="2.2" fill="#5b6ee1"/><path d="M3.1 5.2 L5.2 6.9 L9 3.1" fill="none" stroke="#fff" stroke-width="1.7"/></svg>
<svg style="position:absolute;left:898.3px;top:520.55px" width="12" height="10.2" viewBox="0 0 12 10.2"><rect x="0" y="0" width="12" height="10.2" rx="2.2" fill="#5b6ee1"/><path d="M3.1 5.2 L5.2 6.9 L9 3.1" fill="none" stroke="#fff" stroke-width="1.7"/></svg>
<svg style="position:absolute;left:971.7px;top:520.55px" width="12" height="10.2" viewBox="0 0 12 10.2"><rect x="0" y="0" width="12" height="10.2" rx="2.2" fill="#5b6ee1"/><path d="M3.1 5.2 L5.2 6.9 L9 3.1" fill="none" stroke="#fff" stroke-width="1.7"/></svg>
<svg style="position:absolute;left:1049.5px;top:520.55px" width="12" height="10.2" viewBox="0 0 12 10.2"><rect x="0" y="0" width="12" height="10.2" rx="2.2" fill="#5b6ee1"/><path d="M3.1 5.2 L5.2 6.9 L9 3.1" fill="none" stroke="#fff" stroke-width="1.7"/></svg>
</div></body></html>
